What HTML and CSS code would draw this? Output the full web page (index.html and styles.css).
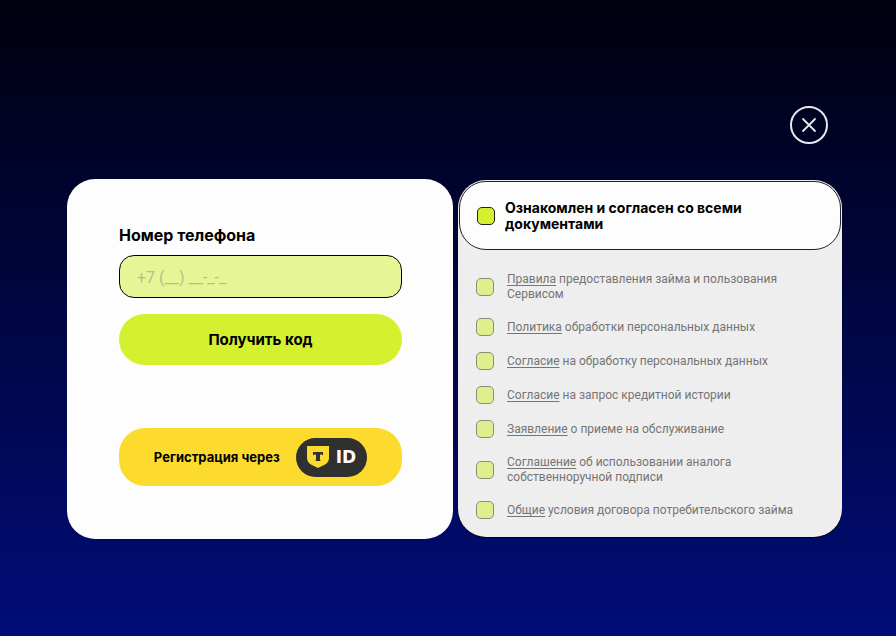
FILE: index.html
```html
<!doctype html>
<html lang="ru">
  <head>
    <meta charset="UTF-8" />
    <meta name="viewport" content="width=device-width, initial-scale=1.0"/>
    <title>Регистрация</title>
    <link rel="stylesheet" href="styles.css">
  </head>
  <body>
    <main class="modal">
      <button class="close" type="button" aria-label="Закрыть">
        <svg width="38" height="38" viewBox="0 0 38 38" fill="none" stroke="#e8e8ee">
          <circle cx="19" cy="19" r="18" stroke-width="2"/>
          <path d="M13 13L25 25M25 13L13 25" stroke-width="1.8" stroke-linecap="round"/>
        </svg>
      </button>
      <form class="panels">
        <section class="card">
          <label class="phone-label" for="phone">Номер телефона</label>
          <input class="phone" type="tel" id="phone" placeholder="+7 (__) __-_-_" />
          <button class="btn btn-code" type="button">Получить код</button>
          <button class="btn btn-tid" type="button">
            <span>Регистрация через</span>
            <span class="tid">
              <svg width="22" height="22" viewBox="0 0 22 22">
                <path d="M0 0H22V12C22 15 20.500 17 18 18.400L11 22L4 18.400C1.500 17 0 15 0 12Z" fill="#fddb2e"/>
                <path d="M6 6H16V9.500C15.500 8.900 14.500 8.500 13 8.500V13C13 14 13.300 14.500 13.700 15H8.300C8.700 14.500 9 14 9 13V8.500C7.500 8.500 6.500 8.900 6 9.500Z" fill="#303030"/>
              </svg>
              <span>ID</span>
            </span>
          </button>
        </section>

        <section class="agreements">
          <div class="agree-all">
            <input type="checkbox" class="check" id="all" />
            <label for="all">Ознакомлен и согласен со всеми документами</label>
          </div>
          <div class="docs">
            <div class="doc">
              <input type="checkbox" class="check" id="rules" />
              <label for="rules"><a href="#">Правила</a> предоставления займа и пользования Сервисом</label>
            </div>
            <div class="doc">
              <input type="checkbox" class="check" id="policy" />
              <label for="policy"><a href="#">Политика</a> обработки персональных данных</label>
            </div>
            <div class="doc">
              <input type="checkbox" class="check" id="personal" />
              <label for="personal"><a href="#">Согласие</a> на обработку персональных данных</label>
            </div>
            <div class="doc">
              <input type="checkbox" class="check" id="history" />
              <label for="history"><a href="#">Согласие</a> на запрос кредитной истории</label>
            </div>
            <div class="doc">
              <input type="checkbox" class="check" id="service" />
              <label for="service"><a href="#">Заявление</a> о приеме на обслуживание</label>
            </div>
            <div class="doc">
              <input type="checkbox" class="check" id="signature" />
              <label for="signature"><a href="#">Соглашение</a> об использовании аналога собственноручной подписи</label>
            </div>
            <div class="doc">
              <input type="checkbox" class="check" id="terms" />
              <label for="terms"><a href="#">Общие</a> условия договора потребительского займа</label>
            </div>
          </div>
        </section>
      </form>
    </main>
  </body>
</html>
```
FILE: styles.css
```css
* {
  box-sizing: border-box;
}
body {
  margin: 0;
  min-height: 100vh;
  font-family: Roboto, sans-serif;
  color: #000;
  background: linear-gradient(#00000e, #000d78);
}
.modal {
  display: flex;
  flex-direction: column;
  padding: 106px 54px 0 67px;
}
.close {
  align-self: flex-end;
  display: flex;
  margin: 0 14px 35px 0;
  padding: 0;
  background: none;
  border: none;
  cursor: pointer;
}
.panels {
  display: grid;
  grid-template-columns: 386fr 384fr;
  gap: 5px;
}
.card {
  display: flex;
  flex-direction: column;
  padding: 46px 51px 53px 52px;
  background: #fdfdfd;
  border-radius: 28px;
}
.phone-label {
  font-family: Inter, sans-serif;
  font-size: 16px;
  font-weight: bold;
  line-height: 20px;
  margin-bottom: 10px;
}
.phone {
  width: 100%;
  height: 43px;
  padding: 2px 17px 0;
  font-family: Roboto, sans-serif;
  font-size: 16px;
  background: #e6f596;
  border: 1px solid #000;
  border-radius: 15px;
}
.phone::placeholder {
  color: #b3bd91;
}
.btn {
  display: flex;
  align-items: center;
  justify-content: center;
  padding: 0;
  font-family: Inter, sans-serif;
  font-weight: bold;
  color: #000;
  border: none;
  cursor: pointer;
}
.btn-code {
  height: 51px;
  margin: 16px 0 63px;
  font-size: 15px;
  background: #d4f02f;
  border-radius: 26px;
}
.btn-tid {
  height: 58px;
  gap: 16px;
  font-size: 13px;
  background: #fddb2e;
  border-radius: 26px;
}
.tid {
  display: flex;
  align-items: center;
  gap: 7px;
  height: 39px;
  padding: 0 11px;
  font-family: "DejaVu Sans", sans-serif;
  font-size: 17px;
  font-weight: bold;
  color: #fff;
  background: #303030;
  border-radius: 20px;
}
.agreements {
  display: flex;
  flex-direction: column;
  margin: 1px 0 2px;
  padding: 1px;
  background: #eee;
  border-radius: 28px;
  box-shadow: 0 1px 0 #000;
}
.agree-all {
  display: flex;
  align-items: center;
  gap: 10px;
  min-height: 69px;
  padding: 0 60px 0 17px;
  font-family: Inter, sans-serif;
  font-size: 14px;
  font-weight: bold;
  line-height: 16px;
  background: #fdfdfd;
  border: 1px solid #222;
  border-radius: 27px;
}
.check {
  appearance: none;
  flex: none;
  width: 18px;
  height: 18px;
  margin: 0;
  background: #d4f02f;
  border: 1px solid #222;
  border-radius: 5px;
  cursor: pointer;
}
.docs {
  flex: 1;
  display: flex;
  flex-direction: column;
  justify-content: space-between;
  padding: 21px 30px 17px 17px;
  font-size: 12px;
  line-height: 15px;
  color: #757575;
}
.doc {
  display: flex;
  align-items: center;
  gap: 13px;
}
.doc label {
  padding-top: 1px;
}
.doc .check {
  background: #e0ee8d;
  border-color: #8a8b7c;
}
.doc a {
  color: inherit;
  text-underline-offset: 2px;
}
```
